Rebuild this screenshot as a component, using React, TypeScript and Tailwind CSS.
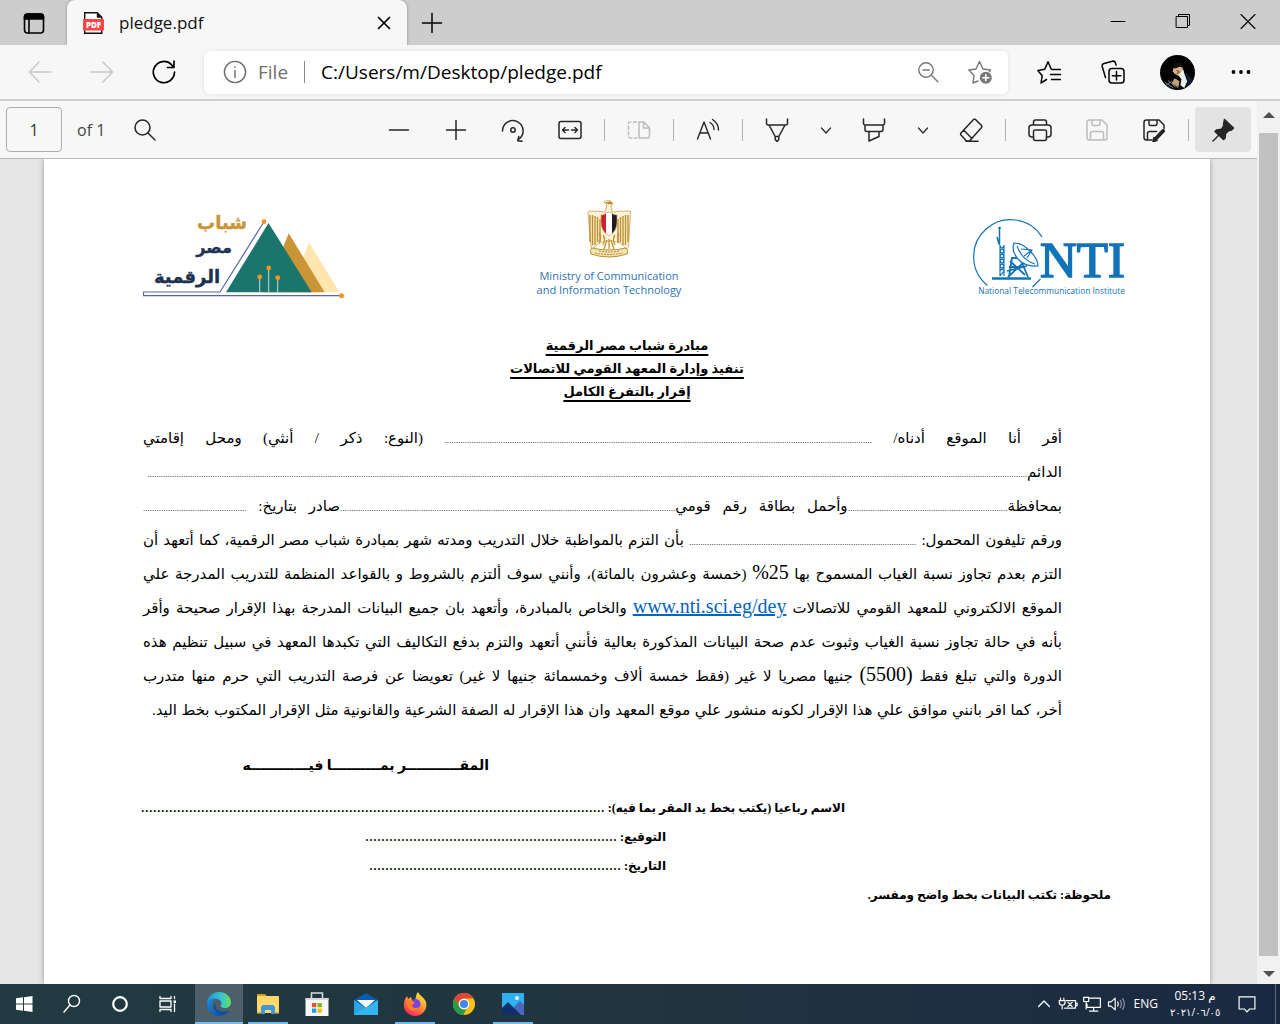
import React from "react";

type IconProps = {
  children: React.ReactNode;
  className?: string;
  w?: number;
};

function Icon({ children, className = "size-6", w = 1.5 }: IconProps) {
  return (
    <svg
      viewBox="0 0 24 24"
      className={className}
      fill="none"
      stroke="currentColor"
      strokeWidth={w}
      strokeLinecap="round"
      strokeLinejoin="round"
      aria-hidden="true"
    >
      {children}
    </svg>
  );
}

function TitleBar() {
  return (
    <header className="flex h-[45px] items-stretch bg-[#cdcdcd]">
      <button aria-label="Tab actions" className="flex w-[67px] items-center justify-center text-black">
        <Icon w={1.6}>
          <rect x="2.5" y="3" width="19" height="19" rx="3" />
          <path d="M2.5 8V6a3 3 0 0 1 3-3h13a3 3 0 0 1 3 3v2z" fill="currentColor" />
          <path d="M7 8v14" />
        </Icon>
      </button>
      <div className="flex w-[340px] items-center rounded-t-lg bg-[#f7f7f7] pl-[15px] pr-[11px] shadow-[0_0_3px_rgba(0,0,0,0.35)] [clip-path:inset(-4px_-4px_0_-4px)]">
        <svg viewBox="0 0 24 24" className="size-6" aria-hidden="true">
          <path d="M2.7 1.7h12.6l4.5 4.6v16H2.7z" fill="#fff" stroke="#111" strokeWidth="1.4" />
          <path d="M14.8 1.5v5.2h5.2z" fill="#111" />
          <rect x="1" y="8" width="21" height="11.5" rx="1" fill="#ff4545" />
          <text x="11.5" y="16.8" textAnchor="middle" fontFamily="Open Sans, sans-serif" fontWeight="800" fontSize="8" fill="#fff">PDF</text>
        </svg>
        <span className="ml-[13px] flex-1 text-[17px] leading-6 text-[#111]">pledge.pdf</span>
        <button aria-label="Close tab" className="text-black">
          <Icon w={1.7}><path d="M6.5 6.5l11 11M17.5 6.5l-11 11" /></Icon>
        </button>
      </div>
      <button aria-label="New tab" className="flex w-[50px] items-center justify-center text-black">
        <Icon><path d="M12 2.5v19M2.5 12h19" /></Icon>
      </button>
      <div className="ml-auto flex">
        <button aria-label="Minimize" className="flex w-[65px] items-center justify-center pb-1 text-black">
          <Icon w={1}><path d="M5 12.5h14" /></Icon>
        </button>
        <button aria-label="Restore" className="flex w-[65px] items-center justify-center pb-1 text-black">
          <Icon w={1}><rect x="5.5" y="7.5" width="11" height="11" /><path d="M7.500 7.500v-2h11v11h-2" /></Icon>
        </button>
        <button aria-label="Close" className="flex w-[65px] items-center justify-center pb-1 text-black">
          <Icon w={1.1}><path d="M5 5.500l14 14M19 5.500l-14 14" /></Icon>
        </button>
      </div>
    </header>
  );
}

function AddressBar() {
  return (
    <nav className="flex h-[56px] items-center border-b-2 border-[#cfcfcf] bg-[#f7f7f7] pl-[9px] pr-[7px]">
      <button aria-label="Back" disabled className="flex w-[62px] justify-center text-[#c8c8c8]">
        <Icon><path d="M23 12H1.500M11 2L1.500 12l9.500 10" /></Icon>
      </button>
      <button aria-label="Forward" disabled className="flex w-[62px] justify-center text-[#c8c8c8]">
        <Icon><path d="M1 12h21.500M13 2l9.500 10L13 22" /></Icon>
      </button>
      <button aria-label="Refresh" className="flex w-[62px] justify-center text-black">
        <Icon w={1.7}><path d="M22.500 12A10.600 10.600 0 1 1 19.500 4.700L21.500 7M22 1v6.500h-6.500" /></Icon>
      </button>
      <div className="mx-[9px] flex h-[43px] flex-1 items-center rounded-md bg-white pl-[19px] pr-[16px] shadow-[0_0_4px_rgba(0,0,0,0.1)]">
        <span className="text-[#6b6b6b]">
          <Icon w={1.4}><circle cx="12" cy="12" r="10.600" /><path d="M12 10.500v7M12 6.800v.4" /></Icon>
        </span>
        <span className="ml-[11px] text-[19px] text-[#707070]">File</span>
        <span className="mx-[16px] h-[22px] w-px bg-[#888]" />
        <input
          aria-label="Address"
          defaultValue="C:/Users/m/Desktop/pledge.pdf"
          className="min-w-0 flex-1 bg-transparent text-[19px] text-black outline-none"
        />
        <button aria-label="Zoom" className="mr-[28px] text-[#777]">
          <Icon w={1.4}><circle cx="10" cy="10" r="7.200" /><path d="M15.300 15.300l6.500 6.500M6.800 10h6.400" /></Icon>
        </button>
        <button aria-label="Add to favorites" className="text-[#777]">
          <Icon w={1.4}>
            <path d="M10 21l-5 2 1-7.500L.8 10l7.200-1L11.500 1.500 15 9l7.500 1-1 1.500" />
            <circle cx="17.800" cy="17.800" r="6" fill="currentColor" stroke="none" />
            <path d="M17.800 14.800v6M14.800 17.800h6" stroke="#fff" strokeWidth="1.6" />
          </Icon>
        </button>
      </div>
      <button aria-label="Favorites" className="flex w-[64px] justify-center text-black">
        <Icon w={1.5}><path d="M9.500 19.500L4 23l1.200-7.300L.8 10.500l7-1.200L11 1.800l3.300 7.400M15.500 9.500h8M13.500 14.500h10M14.500 19.500h9" /></Icon>
      </button>
      <button aria-label="Collections" className="flex w-[64px] justify-center text-black">
        <Icon w={1.5}>
          <rect x="8" y="8.500" width="15" height="14.500" rx="3" />
          <path d="M15.500 11.500v8.500M11.300 15.800h8.500M4.500 17.500L1.200 6.500a2.600 2.600 0 0 1 1.800-3L11.500 1.200a2.600 2.600 0 0 1 3 1.800l.6 2" />
        </Icon>
      </button>
      <button aria-label="Profile" className="flex w-[64px] justify-center">
        <svg viewBox="0 0 36 36" className="size-[35px] rounded-full" aria-hidden="true">
          <rect width="36" height="36" fill="#030303" />
          <path d="M14 13l4-3 5 2 1 5-3 5-5-2-3-3z" fill="#d9b48c" />
          <path d="M13 13l3-5 6 0 3 5-5-1-4 2z" fill="#111" />
          <path d="M19 21l5-6 1 4 3 8-3 7-4-3 1-6z" fill="#e9eee9" />
          <path d="M15 24l5 3-1 6-7-4z" fill="#c4a26d" />
          <path d="M5 28l9 6M8 26l8 7M6 31l6-4M12 29l7 5" stroke="#70868c" />
          <path d="M17 16l3 1M17 19l3-1" stroke="#5d3622" />
          <path d="M27 18l7 8-3 7-3-4z" fill="#101c30" />
        </svg>
      </button>
      <button aria-label="Settings and more" className="flex w-[64px] justify-center text-black">
        <Icon><g fill="currentColor" stroke="none"><circle cx="4.500" cy="12" r="1.900" /><circle cx="12" cy="12" r="1.900" /><circle cx="19.500" cy="12" r="1.900" /></g></Icon>
      </button>
    </nav>
  );
}

function Tool({ label, children, className = "w-14" }: { label: string; children: React.ReactNode; className?: string }) {
  return (
    <button aria-label={label} className={`flex h-[45px] items-center justify-center rounded ${className}`}>
      {children}
    </button>
  );
}

function Divider() {
  return <span className="mx-[5px] h-[22px] w-px bg-[#b0b0b0]" />;
}

function Chevron({ label }: { label: string }) {
  return (
    <Tool label={label} className="w-[39px]">
      <Icon w={1.2}><path d="M7.500 10l4.500 5 4.500-5" /></Icon>
    </Tool>
  );
}

function PdfToolbar() {
  return (
    <div className="flex h-[58px] items-center border-b border-[#b9b9b9] bg-[#f7f7f7] px-[6px] text-[#262626]">
      <input
        aria-label="Page number"
        defaultValue="1"
        className="h-[45px] w-14 rounded-sm border border-[#adadad] bg-transparent text-center text-[16px] text-[#333]"
      />
      <span className="ml-[15px] text-[16px] text-[#444]">of 1</span>
      <button aria-label="Find" className="ml-[28px]">
        <Icon><circle cx="9.500" cy="9.500" r="7.500" /><path d="M15 15l7 7" /></Icon>
      </button>
      <div className="ml-auto flex items-center gap-px">
        <Tool label="Zoom out"><Icon><path d="M2.500 12h19" /></Icon></Tool>
        <Tool label="Zoom in"><Icon><path d="M2.500 12h19M12 2.500v19" /></Icon></Tool>
        <Tool label="Rotate">
          <Icon><path d="M1.500 13A10.300 10.300 0 1 1 17.500 21.500M21 23.300l-4.300-.6L17.800 18.500" /><circle cx="12" cy="12" r="2.200" /></Icon>
        </Tool>
        <Tool label="Fit to width">
          <Icon><rect x="1" y="3.500" width="22" height="17" rx="2" /><path d="M4.500 12h6M13.500 12h6M7 9.500L4.500 12 7 14.500M17 9.500l2.500 2.500-2.500 2.500" /></Icon>
        </Tool>
        <Divider />
        <Tool label="Page view" className="w-14 text-[#bdbdbd]">
          <Icon><path d="M9.500 4H3.500a2 2 0 0 0-2 2v12a2 2 0 0 0 2 2h6" strokeDasharray="3 2.500" /><path d="M12 4v16h8.500a2 2 0 0 0 2-2v-8L17 4zM16.500 4v6h6" /></Icon>
        </Tool>
        <Divider />
        <Tool label="Read aloud">
          <Icon w={1.400}><path d="M1.500 21L8 4l6.500 17M3.800 15h8.500M14 4.500a8 8 0 0 1 4 7M16.500 1.500c4 2.500 6 6 6 10.500" /></Icon>
        </Tool>
        <Divider />
        <Tool label="Draw">
          <Icon><path d="M1.500 1v4.500a1.500 1.500 0 0 0 1.500 1.500h18a1.500 1.500 0 0 0 1.500-1.500V1M4 7l6.200 11.500h3.600L20 7M10.200 18.500v3L12 23.500l1.800-2v-3" /></Icon>
        </Tool>
        <Chevron label="Draw options" />
        <Tool label="Highlight">
          <Icon><path d="M1.500 1v4.500A1.500 1.500 0 0 0 3 7h18a1.500 1.500 0 0 0 1.500-1.500V1M3 7v4.500a2 2 0 0 0 2 2h14a2 2 0 0 0 2-2V7M7 13.500v9.500l10-4.500v-5" /></Icon>
        </Tool>
        <Chevron label="Highlight options" />
        <Tool label="Erase">
          <Icon><path d="M2 15L14.500 1.500q1-.8 2 0l6 6q.8 1 0 2L10.500 23H7.500L2 17q-.8-1 0-2zM4.500 12l8.500 8.500M7 23.300h12" /></Icon>
        </Tool>
        <Divider />
        <Tool label="Print">
          <Icon><path d="M5.500 19H4a3 3 0 0 1-3-3v-6a3 3 0 0 1 3-3h16a3 3 0 0 1 3 3v6a3 3 0 0 1-3 3h-1.500M5.500 7V4a2 2 0 0 1 2-2h9a2 2 0 0 1 2 2v3" /><rect x="5.500" y="12" width="13" height="10.500" rx="2" /></Icon>
        </Tool>
        <Tool label="Save" className="w-14 text-[#bdbdbd]">
          <Icon><path d="M2 4.500a2.500 2.500 0 0 1 2.500-2.500H17l5 5v12.500a2.500 2.500 0 0 1-2.500 2.500h-15A2.500 2.500 0 0 1 2 19.500zM7 2v4a1.500 1.500 0 0 0 1.500 1.500h5A1.500 1.500 0 0 0 15 6V2M5.500 22v-6.500a2 2 0 0 1 2-2h9a2 2 0 0 1 2 2V22" /></Icon>
        </Tool>
        <Tool label="Save as">
          <Icon>
            <path d="M10 22H4.500A2.500 2.500 0 0 1 2 19.500v-15A2.500 2.500 0 0 1 4.500 2H17l5 5v3.500M7 2v4a1.500 1.500 0 0 0 1.500 1.500h5A1.500 1.500 0 0 0 15 6V2M5.500 22v-6.500a2 2 0 0 1 2-2h7" />
            <path d="M13 21.500L21 13" strokeWidth="4" /><path d="M11 23.500l1-4 3 3z" fill="currentColor" />
          </Icon>
        </Tool>
        <Divider />
        <Tool label="Unpin toolbar" className="w-14 bg-[#e3e3e3]">
          <Icon><path d="M13.500 1.500l9 8.500-2 2-3 .8-3 3-.5 4.500-1.500 1.200-8.500-8 1.500-1.500 5-.8 2-3 .5-4.500z" fill="currentColor" /><path d="M8 17l-6 6" /></Icon>
        </Tool>
      </div>
    </div>
  );
}

function YouthLogo() {
  return (
    <svg viewBox="143 200 203 101" className="w-[203px]" role="img" aria-label="شباب مصر الرقمية">
      <path d="M309 243.300l30.500 50H290z" fill="#fee6ae" />
      <path d="M288.700 234.300l36 59H265z" fill="#c99536" />
      <path d="M268.500 224l43.200 69.300H226z" fill="#1a756d" />
      <path d="M264 222.700L220 293h-76.500v3.700H341" fill="none" stroke="#5a63ae" strokeWidth="1.200" />
      <path d="M259.700 278v15.300M268.700 269v24.300M277.700 279v14.300" stroke="#c3dcd8" />
      <g fill="#f7931e">
        <circle cx="264" cy="222.700" r="2.400" /><circle cx="341.500" cy="296.700" r="2.500" />
        <circle cx="259.700" cy="278" r="2.400" /><circle cx="268.700" cy="269" r="2.400" /><circle cx="277.700" cy="278.700" r="2.400" />
      </g>
      <g fontFamily="DejaVu Sans, sans-serif" fontWeight="700" textAnchor="middle">
        <text x="222" y="230" fontSize="18" fill="#c99536" stroke="#c99536" strokeWidth=".4">شباب</text>
        <text x="214" y="254" fontSize="16" fill="#1d3350" stroke="#1d3350" strokeWidth=".4">مصر</text>
        <text x="187" y="284" fontSize="18" fill="#1d3350" stroke="#1d3350" strokeWidth=".4">الرقمية</text>
      </g>
    </svg>
  );
}

function MinistryLogo() {
  return (
    <div className="flex flex-col items-center">
      <svg viewBox="0 0 44 60" className="h-[60px] w-11" aria-hidden="true">
        <path d="M17 3q3-3 7-1l2 3-2 1 1 7q9-1 18-1l.5 2-2 34-2 2-6-6-8-2H18l-7 3-5 5-2-2L1 14l1-2q9 0 16 1l2-7z" fill="#fbf3dc" stroke="#c9a24a" strokeWidth=".8" />
        <path d="M3 16v27M5.500 16v30M8 17v29M10.500 18v25M13 20v23M41 16v27M38.500 16v30M36 17v29M33.500 18v25M31 20v23" stroke="#bb8f2c" strokeWidth="1.400" />
        <path d="M12 34q3 4 0 10M16 36q3 4 0 10M28 36q-3 4 0 10M32 34q-3 4 0 10M20 41l-3 9M24 41l3 9M22 40v10" stroke="#c08f2a" strokeWidth="1.300" fill="none" />
        <path d="M18 3.500l5-1 3 2-4 1z" fill="#b8862b" />
        <path d="M14 16q4 0 5-2v21q-5-5-5-12z" fill="#cf1f2e" />
        <path d="M19 14q3-2 6 0v21l-3 2-3-2z" fill="#fff" />
        <path d="M25 14q1 2 5 2v7q0 7-5 12z" fill="#1c1c22" />
        <path d="M14 16q4 0 5-2 3-2 6 0 1 2 5 2v7q0 9-8 14-8-5-8-14z" fill="none" stroke="#c9a24a" strokeWidth=".7" />
        <path d="M5 49q17 4 34 0 3 2 1 6-9 3-18 3T4 55q-2-4 1-6z" fill="#f3e3b2" stroke="#bb8f2c" />
        <path d="M8 54q14 3 28 0M12 52q10 2 20 0" stroke="#bb8f2c" strokeDasharray="2 1" fill="none" />
      </svg>
      <p className="mt-[10px] text-center text-[11px] leading-[14px] text-[#2e74b5]">
        Ministry of Communication
        <br />
        and Information Technology
      </p>
    </div>
  );
}

function NtiLogo() {
  return (
    <svg viewBox="973 218 154 80" className="w-[154px]" role="img" aria-label="NTI National Telecommunication Institute">
      <g fill="none" stroke="#1273b9">
        <path d="M1043 238A37 37 0 1 0 988.500 286.500M1033.500 288l8-8" strokeWidth="1.200" />
        <path d="M1000.500 229v17M998 238l2 7" strokeWidth="1.500" />
        <path d="M1001 246v31M1005 246v31M1001 247l4 5-4 5 4 5-4 5 4 5-4 5M1005 247l-4 5 4 5-4 5 4 5-4 5" strokeWidth="1.200" />
        <path d="M993 279.500h39" strokeWidth="2.500" />
        <path d="M1010 278l3-19h8l8 19M1008 272l20-5M1011 262l15 14M1009 278l16-15M1010 268h16" strokeWidth="1.800" />
        <path d="M1015 244q-3 8 4 16t20 7q0-7-8-15t-16-8z" fill="#fff" strokeWidth="1.200" />
        <path d="M1022 250l11 1-5 8M1033 251l-8 6M1018 247q5 14 18 18" strokeWidth="1.100" />
      </g>
      <circle cx="1000.500" cy="229" r="1.300" fill="#1273b9" />
      <text x="1041" y="278" fontFamily="Liberation Serif, serif" fontSize="51" fill="#1273b9" stroke="#1273b9" strokeWidth="1.600">NTI</text>
      <text x="1052.500" y="295" textAnchor="middle" fontFamily="Open Sans, sans-serif" fontSize="8.400" fill="#1273b9">National Telecommunication Institute</text>
    </svg>
  );
}

function Dots({ n }: { n: number }) {
  return <span className="text-[9px] leading-none">{".".repeat(n)}</span>;
}

function Line({ children, className = "" }: { children: React.ReactNode; className?: string }) {
  return (
    <div className={`whitespace-nowrap text-justify [text-align-last:justify] ${className}`}>{children}</div>
  );
}

function SignRow({ label, n, className }: { label: string; n: number; className: string }) {
  return (
    <p className={`whitespace-nowrap ${className}`}>
      <span>{label}</span> <span className="text-[16px] font-normal leading-none">{".".repeat(n)}</span>
    </p>
  );
}

function Document() {
  return (
    <article className="ml-11 mr-[47px] flex-1 bg-white shadow-[0_0_5px_rgba(0,0,0,0.35)]">
      <div className="flex items-start justify-between pl-[99px] pr-[84px] pt-10">
        <YouthLogo />
        <div className="pr-[100px]"><MinistryLogo /></div>
        <div className="pt-[18px]"><NtiLogo /></div>
      </div>
      <h1 dir="rtl" className="mt-[34px] text-center font-['Liberation_Serif','DejaVu_Sans',serif] text-[13px] font-bold leading-[23px] text-black underline decoration-2 underline-offset-4">
        مبادرة شباب مصر الرقمية
        <br />
        تنفيذ وإدارة المعهد القومي للاتصالات
        <br />
        إقرار بالتفرغ الكامل
      </h1>
      <div dir="rtl" className="mt-[18px] pl-[99px] pr-[148px] font-['Liberation_Serif','DejaVu_Sans',serif] text-[15px] leading-[34px] text-black">
        <Line>أقر أنا الموقع أدناه/ <Dots n={190} /> (النوع: ذكر / أنثي) ومحل إقامتي</Line>
        <div className="whitespace-nowrap">الدائم<Dots n={391} /></div>
        <Line>بمحافظة<Dots n={71} />وأحمل بطاقة رقم قومي<Dots n={149} />صادر بتاريخ: <Dots n={46} /></Line>
        <Line>ورقم تليفون المحمول: <Dots n={101} /> بأن التزم بالمواظبة خلال التدريب ومدته شهر بمبادرة شباب مصر الرقمية، كما أتعهد أن</Line>
        <Line>التزم بعدم تجاوز نسبة الغياب المسموح بها <span className="text-[20px] leading-none">25%</span> (خمسة وعشرون بالمائة)، وأنني سوف ألتزم بالشروط و بالقواعد المنظمة للتدريب المدرجة علي</Line>
        <Line>الموقع الالكتروني للمعهد القومي للاتصالات <a href="#dey" className="text-[20px] leading-none text-[#0563c1] underline">www.nti.sci.eg/dey</a> والخاص بالمبادرة، وأتعهد بان جميع البيانات المدرجة بهذا الإقرار صحيحة وأقر</Line>
        <Line>بأنه في حالة تجاوز نسبة الغياب وثبوت عدم صحة البيانات المذكورة بعالية فأنني أتعهد والتزم بدفع التكاليف التي تكبدها المعهد في سبيل تنظيم هذه</Line>
        <Line>الدورة والتي تبلغ فقط <span className="text-[20px] leading-none">(5500)</span> جنيها مصريا لا غير (فقط خمسة ألاف وخمسمائة جنيها لا غير) تعويضا عن فرصة التدريب التي حرم منها متدرب</Line>
        <Line className="pl-[9px]">أخر، كما اقر بانني موافق علي هذا الإقرار لكونه منشور علي موقع المعهد وان هذا الإقرار له الصفة الشرعية والقانونية مثل الإقرار المكتوب بخط اليد.</Line>
      </div>
      <div dir="rtl" className="pr-[99px] font-['Liberation_Serif','DejaVu_Sans',serif] text-[12px] font-bold leading-[29px] text-black">
        <p className="mr-[622px] mt-[24px] whitespace-nowrap text-[14px]">المقـــــــــــر بمــــــــــا فيــــــــــــه</p>
        <SignRow label="الاسم رباعيا (يكتب بخط يد المقر بما فيه):" n={116} className="mr-[266px] mt-[14px]" />
        <SignRow label="التوقيع:" n={63} className="mr-[445px]" />
        <SignRow label="التاريخ:" n={63} className="mr-[445px]" />
        <p>ملحوظة: تكتب البيانات بخط واضح ومفسر.</p>
      </div>
    </article>
  );
}

function ScrollBar() {
  return (
    <div className="flex w-[23px] flex-col items-center bg-[#f1f1f1]">
      <button aria-label="Scroll up" className="flex h-8 items-center justify-center pb-1">
        <svg viewBox="0 0 12 6" className="h-[6px] w-3" aria-hidden="true"><path d="M0 6l6-6 6 6z" fill="#505050" /></svg>
      </button>
      <div className="w-[19px] flex-1 bg-[#c1c1c1]" />
      <button aria-label="Scroll down" className="flex h-7 items-center justify-center pt-2">
        <svg viewBox="0 0 12 6" className="h-[6px] w-3" aria-hidden="true"><path d="M0 0l6 6 6-6z" fill="#505050" /></svg>
      </button>
    </div>
  );
}

function Task({ label, children, state = "" }: { label: string; children: React.ReactNode; state?: string }) {
  return (
    <button aria-label={label} className={`relative flex w-12 items-center justify-center ${state === "active" ? "bg-[#4d6069]" : ""}`}>
      {children}
      {state === "active" && <span className="absolute inset-x-0 bottom-0 h-[2px] bg-[#76b9ed]" />}
      {state === "open" && <span className="absolute inset-x-1 bottom-0 h-[2px] bg-[#76b9ed]" />}
    </button>
  );
}

function TaskBar() {
  return (
    <footer className="flex h-10 items-stretch bg-linear-to-r from-[#223a42] via-[#20353f] to-[#1a2942] text-white">
      <Task label="Start">
        <Icon><path d="M4 6.300l7-1v6.200H4zM12 5.200l8.500-1.200v7.500H12zM4 12.500h7v6.200l-7-1zM12 12.500h8.500V20L12 18.800z" fill="#fff" stroke="none" /></Icon>
      </Task>
      <Task label="Search"><Icon w={1.400}><circle cx="14" cy="9" r="5.500" /><path d="M10 13l-6 7" /></Icon></Task>
      <Task label="Cortana"><Icon w={2.200}><circle cx="12" cy="12" r="6.800" /></Icon></Task>
      <Task label="Task view">
        <Icon w={1.300}><path d="M4 4.500v2h11v-2M4 19.500v-2h11v2M4 9h11v6H4zM18.500 4.500v2M18.500 12v7.500" /><rect x="17.500" y="8.500" width="2.500" height="2.500" fill="#fff" stroke="none" /></Icon>
      </Task>
      <div className="ml-[3px] flex gap-px">
        <Task label="Microsoft Edge" state="active">
          <svg viewBox="0 0 24 24" className="size-6" aria-hidden="true">
            <defs>
              <linearGradient id="edgeTop" x1="0" x2="1"><stop stopColor="#1f96e0" /><stop offset=".6" stopColor="#35c6d2" /><stop offset="1" stopColor="#6adf5c" /></linearGradient>
              <linearGradient id="edgeLow" x1="0" x2="1" y1="0" y2="1"><stop stopColor="#1a8bdc" /><stop offset="1" stopColor="#0c459c" /></linearGradient>
            </defs>
            <path d="M0 11C1 4 6 0 12 0c7 0 12 5 12 10 0 4-3 6-6 6-3 0-5-1-4-3 1-1 1-5-4-6C6 6 2 8 0 11z" fill="url(#edgeTop)" />
            <path d="M0 12c0-4 4-6 8-5-3 2-4 6-2 10 2 3 8 6 14 3l2-1c-2 3-6 5-10 5C5 24 0 18 0 12z" fill="url(#edgeLow)" />
            <path d="M10 10c-3 2-2 7 2 9 4 1 7 1 10-1-2 4-7 5-11 3-5-3-6-9-1-11z" fill="#104f9f" />
          </svg>
        </Task>
        <Task label="File Explorer" state="open">
          <svg viewBox="0 0 24 24" className="size-6" aria-hidden="true">
            <path d="M1 2h8l2 2v4H1z" fill="#d99a16" /><rect x="1" y="4" width="22" height="17" rx="1" fill="#ffd869" />
            <path d="M5 22v-7l2-2h10l2 2v7h-4v-4H9v4z" fill="#4396d8" /><path d="M1 20h4v1.500H1zM19 20h4v1.500h-4z" fill="#f2b73c" />
          </svg>
        </Task>
        <Task label="Microsoft Store">
          <svg viewBox="0 0 24 24" className="size-6" aria-hidden="true">
            <path d="M6.500 7V1h11v6" fill="none" stroke="#dedede" strokeWidth="1.500" /><path d="M.5 6h23v18H.5z" fill="#f7f7f7" /><path d="M.5 6h23v2H.5z" fill="#d9d9d9" />
            <path d="M7 11h4.300v4.300H7z" fill="#f25022" /><path d="M12.500 11h4.300v4.300h-4.300z" fill="#7fba00" /><path d="M7 16.500h4.300v4.300H7z" fill="#00a4ef" /><path d="M12.500 16.500h4.300v4.300h-4.300z" fill="#ffb900" />
          </svg>
        </Task>
        <Task label="Mail">
          <svg viewBox="0 0 24 24" className="size-6" aria-hidden="true">
            <path d="M0 8l12-7 12 7v5H0z" fill="#0f5ba8" /><path d="M3 8h18l-9 8z" fill="#f5f5f5" /><path d="M0 8l12 8 12-8v15H0z" fill="#29a4e4" /><path d="M24 8v15H0z" fill="#3cc1f7" opacity=".6" />
          </svg>
        </Task>
        <Task label="Firefox" state="open">
          <svg viewBox="0 0 24 24" className="size-6" aria-hidden="true">
            <defs><linearGradient id="fox" x1=".8" x2=".2" y1="0" y2="1"><stop stopColor="#fff04b" /><stop offset=".45" stopColor="#ff9a27" /><stop offset="1" stopColor="#f5156c" /></linearGradient></defs>
            <path d="M15 0c1 3 6 5 8 10 2 8-4 14-11 14S0 18 1 12c0-3 1-5 3-8l1 3 3-2 1 3 3 1c1-4 1-7 3-9z" fill="url(#fox)" />
            <circle cx="12.500" cy="12" r="5" fill="#7543e5" /><path d="M4 10c3-3 6-1 8 1l-3 2c0 3 4 4 7 2-2 5-10 5-12-1z" fill="#ff7e26" />
          </svg>
        </Task>
        <Task label="Chrome">
          <svg viewBox="0 0 24 24" className="size-6" aria-hidden="true">
            <circle cx="12" cy="12" r="11" fill="#fbc116" /><path d="M2.500 6.500a11 11 0 0 1 19 0H12a5.500 5.500 0 0 0-5 8z" fill="#df4436" /><path d="M2.500 6.500l4.800 8.300a5.500 5.500 0 0 0 7 2L11.500 23A11 11 0 0 1 2.500 6.500z" fill="#249a4d" />
            <circle cx="12" cy="12" r="5.200" fill="#fff" /><circle cx="12" cy="12" r="4.100" fill="#4285f4" />
          </svg>
        </Task>
        <Task label="Photos" state="open">
          <svg viewBox="0 0 24 24" className="size-6" aria-hidden="true">
            <rect x="1" y="1" width="22" height="22" fill="#2fb1f1" /><path d="M13 15l6-6 4 4v10H13z" fill="#4a66bd" /><path d="M1 16l6-6 13 13H1z" fill="#10306a" /><circle cx="16" cy="6" r="2" fill="#e7f6ff" />
          </svg>
        </Task>
      </div>
      <div className="ml-auto flex items-center">
        <button aria-label="Hidden icons" className="flex w-6 justify-center"><Icon className="size-5" w={1.600}><path d="M5.500 15l6.500-6.500L18.500 15" /></Icon></button>
        <span className="flex w-6 justify-center">
          <Icon className="size-5" w={1.400}><path d="M3 5v3M7 5v3M1.500 8h7v2a3.500 3.500 0 0 1-7 0zM5 13.500V18M10 8h11v9H8M21 11h2v3h-2" /><path d="M12 10l5 5M17 10l-5 5" /></Icon>
        </span>
        <span className="flex w-6 justify-center">
          <Icon className="size-5" w={1.400}><path d="M8 5h14v11H6v-4M14 16v4M9 20.500h10M2 4h6v5H2zM5 9v9" /></Icon>
        </span>
        <button aria-label="Volume" className="flex w-6 justify-center">
          <Icon className="size-5" w={1.400}><path d="M3 9.500v5h3l5 4.500V5L6 9.500zM14 9.500q1.500 2.500 0 5" /><path d="M17 7.500q3 4.500 0 9M20 5.500q4 6.500 0 13" opacity=".5" /></Icon>
        </button>
        <span className="ml-[6px] text-[12px]">ENG</span>
        <div className="ml-3 w-[50px] text-center leading-[17px]">
          <div className="text-[12px]">05:13 م</div>
          <div className="whitespace-nowrap text-[10px]">٢٠٢١/٠٦/٠٥</div>
        </div>
        <button aria-label="Notifications" className="ml-[6px] flex w-[42px] justify-center"><Icon className="size-5" w={1.400}><path d="M2.500 3.500h19V18H15l-3 3.500L9 18H2.500z" strokeLinejoin="miter" /></Icon></button>
        <span className="ml-[7px] mr-1 h-10 w-px bg-[#5f6b7c]" />
      </div>
    </footer>
  );
}

export default function App() {
  return (
    <div className="flex min-h-screen flex-col font-['Open_Sans','DejaVu_Sans',sans-serif]">
      <TitleBar />
      <AddressBar />
      <main className="flex flex-1">
        <div className="flex min-w-0 flex-1 flex-col">
          <PdfToolbar />
          <div className="flex flex-1 overflow-hidden bg-[#e6e6e6]"><Document /></div>
        </div>
        <ScrollBar />
      </main>
      <TaskBar />
    </div>
  );
}
